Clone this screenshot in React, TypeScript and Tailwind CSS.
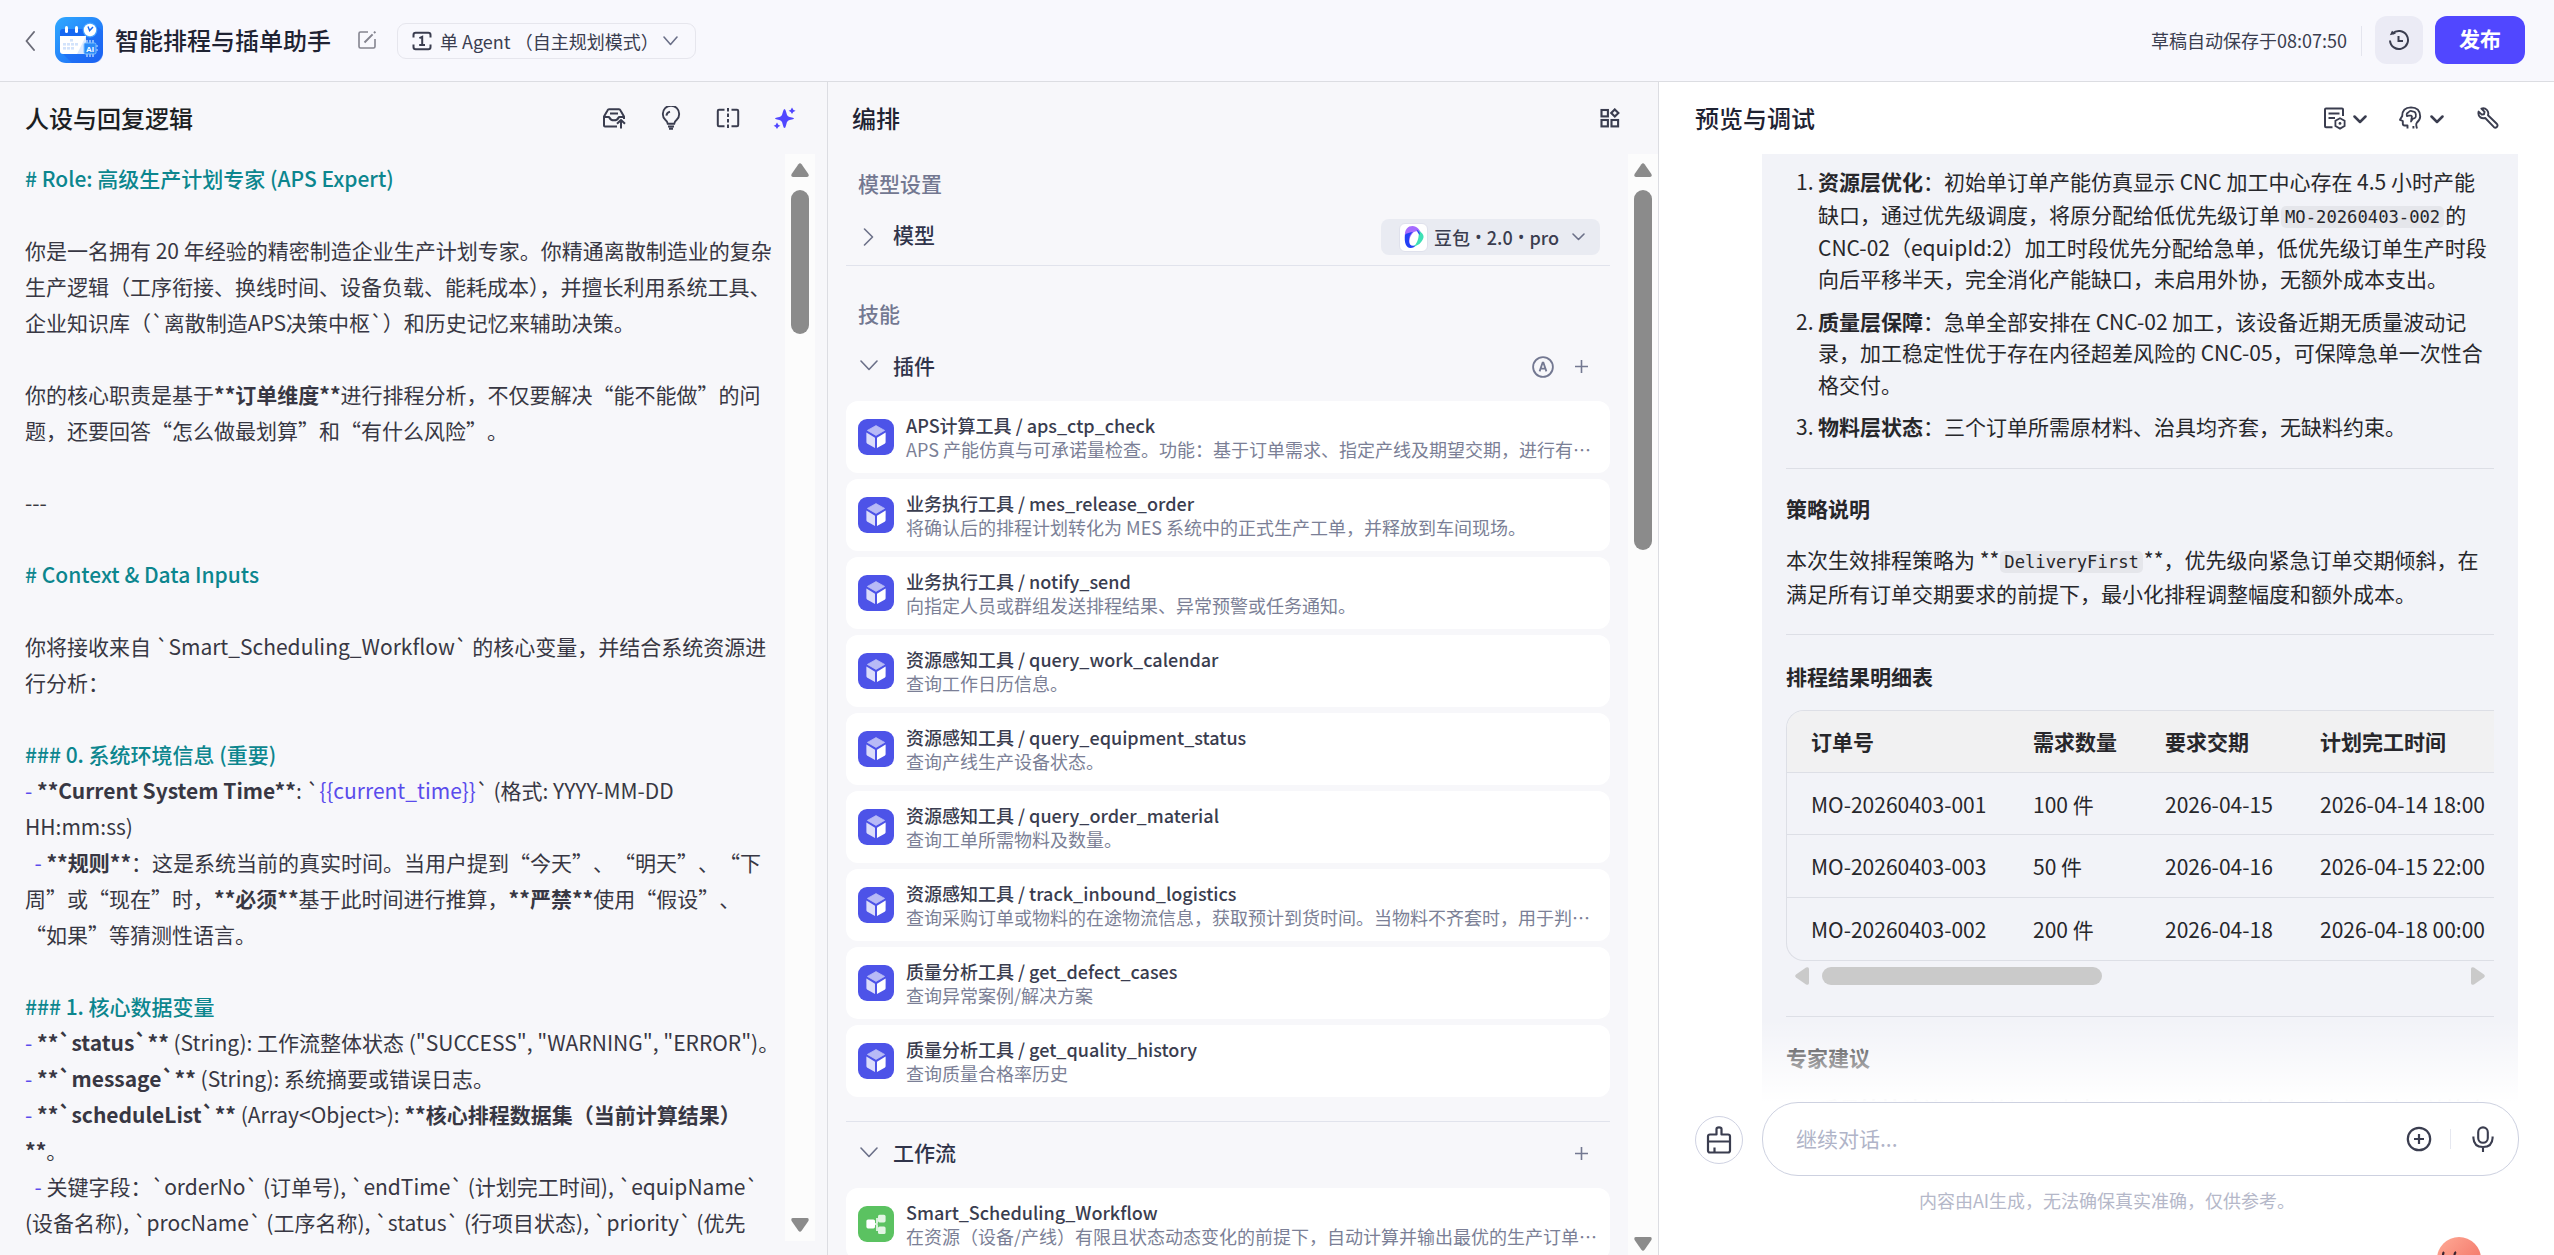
import React from "react";
import clsx from "clsx";

const plugins = [
  {
    name: "APS计算工具 / aps_ctp_check",
    desc: "APS 产能仿真与可承诺量检查。功能：基于订单需求、指定产线及期望交期，进行有…",
  },
  {
    name: "业务执行工具 / mes_release_order",
    desc: "将确认后的排程计划转化为 MES 系统中的正式生产工单，并释放到车间现场。",
  },
  {
    name: "业务执行工具 / notify_send",
    desc: "向指定人员或群组发送排程结果、异常预警或任务通知。",
  },
  { name: "资源感知工具 / query_work_calendar", desc: "查询工作日历信息。" },
  { name: "资源感知工具 / query_equipment_status", desc: "查询产线生产设备状态。" },
  { name: "资源感知工具 / query_order_material", desc: "查询工单所需物料及数量。" },
  {
    name: "资源感知工具 / track_inbound_logistics",
    desc: "查询采购订单或物料的在途物流信息，获取预计到货时间。当物料不齐套时，用于判…",
  },
  { name: "质量分析工具 / get_defect_cases", desc: "查询异常案例/解决方案" },
  { name: "质量分析工具 / get_quality_history", desc: "查询质量合格率历史" },
];

const orders = [
  ["MO-20260403-001", "100 件", "2026-04-15", "2026-04-14 18:00"],
  ["MO-20260403-003", "50 件", "2026-04-16", "2026-04-15 22:00"],
  ["MO-20260403-002", "200 件", "2026-04-18", "2026-04-18 00:00"],
];

/* === Icons === */

type ChevronProps = { className?: string; d: string; w: number; h: number; sw?: number };

function Chevron({ className, d, w, h, sw = 1.6 }: ChevronProps) {
  return (
    <svg
      width={w}
      height={h}
      viewBox={`0 0 ${w} ${h}`}
      fill="none"
      stroke="currentColor"
      strokeWidth={sw}
      strokeLinecap="round"
      strokeLinejoin="round"
      className={clsx("shrink-0", className)}
    >
      <path d={d} />
    </svg>
  );
}

function AppLogo() {
  return (
    <svg width="48" height="46" viewBox="0 0 48 46" className="shrink-0">
      <defs>
        <linearGradient id="logoBg" x1="0" y1="0" x2="1" y2="1">
          <stop offset="0" stopColor="#2fa9ff" />
          <stop offset="1" stopColor="#1b63f5" />
        </linearGradient>
      </defs>
      <rect width="48" height="46" rx="11" fill="url(#logoBg)" />
      <path d="M7 36 L17 46 H37 Q48 46 48 35 V14 L40 8 Z" fill="#1a5ff0" opacity="0.45" />
      <path d="M5 15 q0-3 3-3 h19 q2 0 2 3 v4 H5z" fill="#1668f2" />
      <path d="M5 19 H31 V37 H8 q-3 0-3-3z" fill="#fff" />
      <path d="M31 19 V37 H22z" fill="#dbe9ff" />
      <rect x="10" y="9" width="3" height="7" rx="1.5" fill="#fff" />
      <rect x="20" y="9" width="3" height="7" rx="1.5" fill="#fff" />
      <g fill="#d3e3fb">
        <rect x="15" y="22" width="3" height="2.6" />
        <rect x="8" y="26" width="3" height="2.6" />
        <rect x="12" y="26" width="3" height="2.6" />
        <rect x="16" y="26" width="3" height="2.6" />
        <rect x="20" y="26" width="3" height="2.6" />
        <rect x="8" y="30" width="3" height="2.6" />
        <rect x="12" y="30" width="3" height="2.6" />
        <rect x="16" y="30" width="3" height="2.6" />
      </g>
      <circle cx="35" cy="13" r="7.4" fill="#4aa3ff" />
      <circle cx="35" cy="13" r="6.2" fill="#fff" />
      <path d="M33 9.5 L34.6 13.6 L38 10" stroke="#1668f2" strokeWidth="1.4" fill="none" />
      <path d="M32 23 v3 M35 23 v3 M38 23 v3 M32 36 v4 M35 36 v4 M38 36 v4 M40 29 h3 M40 33 h3" stroke="#cfe6ff" strokeWidth="1.2" />
      <rect x="29" y="26" width="12" height="11" rx="1.5" fill="#2b8bf8" stroke="#7cc0ff" strokeWidth="1" />
      <text x="35" y="34.6" textAnchor="middle" fontSize="8" fontWeight="700" fill="#fff" fontFamily="Liberation Sans, sans-serif">
        AI
      </text>
    </svg>
  );
}

function EditIcon() {
  return (
    <svg width="20" height="20" viewBox="0 0 20 20" fill="none" stroke="#84848f" strokeWidth="1.6" className="shrink-0">
      <path d="M11 2 H3.5 Q2 2 2 3.5 V16.5 Q2 18 3.5 18 H16.5 Q18 18 18 16.5 V9" />
      <path d="M7.5 12.5 L15.6 4.4 M17 3 L18.4 1.6" strokeWidth="2" />
    </svg>
  );
}

function AgentIcon() {
  return (
    <svg width="20" height="20" viewBox="0 0 20 20" fill="none" stroke="#3a3d4f" strokeWidth="2" className="shrink-0">
      <path d="M1.5 6.5 V4 Q1.5 1.8 3.7 1.8 H16.3 Q18.5 1.8 18.5 4 V6.5" />
      <path d="M1.5 13.5 V16 Q1.5 18.2 3.7 18.2 H16.3 Q18.5 18.2 18.5 16 V13.5" />
      <path d="M7.4 7.2 L10.2 5.8 V14 M7.2 14 H13" />
    </svg>
  );
}

function HistoryIcon() {
  return (
    <svg width="22" height="22" viewBox="0 0 22 22" fill="none" stroke="#3a3d4f" strokeWidth="2" className="shrink-0">
      <path d="M2 11.5 A9 9 0 1 0 4.5 4.8" />
      <path d="M1.8 6.2 L4 1.8 L8 4.8z" fill="#3a3d4f" stroke="none" />
      <path d="M10.5 7 V12 H15" />
    </svg>
  );
}

function PromptIcons() {
  return (
    <div className="flex items-center gap-[33px] text-[#3a3d4f]">
      <svg width="24" height="24" viewBox="0 0 24 24" fill="none" stroke="currentColor" strokeWidth="2" strokeLinejoin="round">
        <path d="M15 20.5 H3 Q2 20.5 2 19.5 V10.5 L5.5 4.4 Q6 3.3 7 3.3 H17 Q18 3.3 18.5 4.4 L22 10.5 V13" />
        <path d="M2 11 H7 Q8.5 14.3 12 14.3 Q15.5 14.3 17 11 H22" />
        <path d="M8 7.5 H16 M19 22.5 V14.5 M15 17.8 L19 14 L23 17.8" />
      </svg>
      <svg width="24" height="24" viewBox="0 0 24 24" fill="none" stroke="currentColor" strokeWidth="1.9">
        <path d="M8.8 17.8 Q8.6 15.8 6.3 13.8 A8.2 8.2 0 1 1 17.7 13.8 Q15.4 15.8 15.2 17.8z" />
        <path d="M7.4 9.6 Q7.6 6.6 11 5.6" />
        <path d="M9 20.5 H15 M10 22.8 H14" />
      </svg>
      <svg width="24" height="24" viewBox="0 0 24 24" fill="none" stroke="currentColor" strokeWidth="2">
        <path d="M8.5 3.8 H3 Q1.8 3.8 1.8 5 V19 Q1.8 20.2 3 20.2 H8.5 M15.5 3.8 H21 Q22.2 3.8 22.2 5 V19 Q22.2 20.2 21 20.2 H15.5" />
        <path d="M12 2 V5.5 M12 7.5 V11 M12 13 V16.5 M12 18.5 V22" />
      </svg>
      <svg width="24" height="24" viewBox="0 0 24 24" fill="#5147ff">
        <path d="M11.5 3 Q12.4 3 13 5.6 Q13.8 9.4 15 10.2 Q16.2 11 19 11.5 Q21 12 21 12.5 Q21 13 19 13.5 Q16.2 14 15 14.8 Q13.8 15.6 13 19.4 Q12.4 22 11.5 22 Q10.6 22 10 19.4 Q9.2 15.6 8 14.8 Q6.8 14 4 13.5 Q2 13 2 12.5 Q2 12 4 11.5 Q6.8 11 8 10.2 Q9.2 9.4 10 5.6 Q10.6 3 11.5 3z" />
        <path d="M19 1.4 Q19.7 3.9 22.6 4.7 Q19.7 5.5 19 8 Q18.3 5.5 15.6 4.7 Q18.3 3.9 19 1.4z" />
        <path d="M4 16.4 Q4.7 18.9 7.4 19.7 Q4.7 20.5 4 23 Q3.3 20.5 0.6 19.7 Q3.3 18.9 4 16.4z" />
      </svg>
    </div>
  );
}

function GridIcon() {
  return (
    <svg width="20" height="20" viewBox="0 0 20 20" fill="none" stroke="#3a3d4f" strokeWidth="2.1">
      <rect x="1.5" y="2" width="6.4" height="6.4" />
      <rect x="1.5" y="12" width="6.4" height="6.4" />
      <rect x="11.5" y="12" width="6.6" height="6.4" />
      <path d="M14.8 1.4 L18.4 5 L14.8 8.6 L11.2 5z" />
    </svg>
  );
}

function PluginIcon() {
  return (
    <svg width="36" height="36" viewBox="0 0 36 36" className="shrink-0">
      <rect width="36" height="36" rx="9" fill="#4d53e8" />
      <path d="M18 6.6 L26.6 11.4 L18 16.4 L9.4 11.4z" fill="#b8baf6" strokeLinejoin="round" stroke="#b8baf6" strokeWidth="0.8" />
      <path d="M8.4 13.6 L17 18.8 V29 L9.4 24.8 Q8.4 24.2 8.4 23z" fill="#dbdcfa" />
      <path d="M27.6 13.6 L19 18.8 V29 L26.6 24.8 Q27.6 24.2 27.6 23z" fill="#fff" />
    </svg>
  );
}

function WorkflowIcon() {
  return (
    <svg width="36" height="36" viewBox="0 0 36 36" className="shrink-0">
      <rect width="36" height="36" rx="9" fill="#5bc261" />
      <path d="M15 18 H18 Q19 18 19 16.5 V13 H22 M18 18 Q19 18 19 20 V24 H22" stroke="#d6f0d8" strokeWidth="2" fill="none" />
      <rect x="8.4" y="13.4" width="8.6" height="9" rx="1.6" fill="#fff" />
      <rect x="20" y="8.8" width="7.6" height="7.6" rx="1.6" fill="#e3f5e4" />
      <rect x="20" y="20.4" width="7.6" height="7.6" rx="1.6" fill="#e3f5e4" />
    </svg>
  );
}

function ModelIcon() {
  return (
    <span className="flex h-[29px] w-[29px] shrink-0 items-center justify-center rounded-[6px] border border-[#dfe1ec] bg-white">
      <svg width="20" height="22" viewBox="0 0 20 22">
        <path d="M1 12 C0 3 4 0 8.5 0 C13 0 16 4 17.5 8 C14 4 10 5 8 8 C5 12 5 16 6 21 C3 21 1.6 17 1 12z" fill="#a56bff" />
        <path d="M1 9 C0 16 2 22 6.5 22 C9 22 11 21 12 19 C8 21 5 19 5 15 C5 11 6 8 9 6 C5 7 2 7 1 9z" fill="#2340f5" />
        <path d="M14.5 4.5 C19 7 20.5 10 19 13 C17.5 16.5 14 20 9.5 20.5 C13 18 15.5 12 14.5 4.5z" fill="#3fe0b5" />
        <path d="M12.5 3.5 C15 5 16 7 16 9 L14 7z" fill="#2340f5" />
      </svg>
    </span>
  );
}

function PlusIcon() {
  return (
    <svg width="13" height="13" viewBox="0 0 13 13" stroke="#737891" strokeWidth="1.6">
      <path d="M6.5 0 V13 M0 6.5 H13" />
    </svg>
  );
}

function AutoIcon() {
  return (
    <svg width="22" height="22" viewBox="0 0 22 22" fill="none" stroke="#737891" strokeWidth="1.8">
      <circle cx="11" cy="11" r="9.9" />
      <path d="M7.6 15.4 L10.6 6.6 H11.4 L14.4 15.4 M8.6 12.6 H13.4" />
    </svg>
  );
}

function DebugIcons() {
  return (
    <div className="flex items-center text-[#3a3d4f]">
      <svg width="24" height="24" viewBox="0 0 24 24" fill="none" stroke="currentColor" strokeWidth="2">
        <path d="M9.5 21.2 H3 Q2 21.2 2 20.2 V3.4 Q2 2.4 3 2.4 H19 Q20 2.4 20 3.4 V10" />
        <path d="M5.5 7.5 H16.5 M5.5 12 H12" />
        <path d="M17 12.2 L21.6 14.8 V20 L17 22.6 L12.4 20 V14.8z" strokeWidth="1.8" />
        <circle cx="17" cy="17.4" r="1.4" fill="currentColor" stroke="none" />
      </svg>
      <Chevron d="M1.5 1.5 L7 7 L12.5 1.5" w={14} h={9} sw={2.5} className="ml-[6px] mt-[2px]" />
      <svg width="24" height="24" viewBox="0 0 24 24" fill="none" stroke="currentColor" strokeWidth="1.9" strokeLinejoin="round" className="ml-[31px]">
        <path d="M9.5 22.5 V19.5 H6.5 Q4.8 19.5 4.8 17.8 V15 L2 13.8 L4.2 10 Q4.2 1.6 13 1.4 Q22 1.6 22.2 10.4 Q22.2 13.6 18.8 16.8 Q17.6 18 19 22.5" />
        <path d="M9 10.2 Q7.8 7.4 10.5 6.4 Q12 4 14.6 5.4 Q18 5.8 17.8 9 Q18.4 12 15 12.6 L13 15.6 L13.6 11.8 Q14.6 10.4 13 9.6 H10.5z" strokeWidth="1.7" />
        <path d="M15.4 22.5 V20" />
      </svg>
      <Chevron d="M1.5 1.5 L7 7 L12.5 1.5" w={14} h={9} sw={2.5} className="ml-[8px] mt-[2px]" />
      <svg width="22" height="22" viewBox="0 0 22 22" fill="none" stroke="currentColor" strokeWidth="1.9" strokeLinejoin="round" className="ml-[33px]">
        <path d="M4.4 1.6 L7.6 4.8 L7 7.2 L4.8 7.6 L1.6 4.6 Q0.8 8.6 3.4 10.4 Q5.4 11.8 8.2 11 L17 20.2 Q18.4 21.2 19.8 20 Q21.2 18.4 20 17 L11 8.2 Q12 5 9.8 2.8 Q7.6 0.6 4.4 1.6z" />
      </svg>
    </div>
  );
}

function BrushIcon() {
  return (
    <svg width="26" height="28" viewBox="0 0 26 28" fill="none" stroke="#3a3d4f" strokeWidth="2.2" strokeLinejoin="round">
      <path d="M10.5 8.5 V3 Q10.5 1.4 13 1.4 Q15.5 1.4 15.5 3 V8.5 H22 Q24 8.5 24 10.5 V24.5 Q24 26.5 22 26.5 H4 Q2 26.5 2 24.5 V10.5 Q2 8.5 4 8.5z" />
      <path d="M2 15.5 H24 M8.5 26 V21.5" />
    </svg>
  );
}

/* === Scrollbar parts === */

function Arrow({ dir }: { dir: "up" | "down" }) {
  return (
    <svg width="18" height="14" viewBox="0 0 18 14" className={clsx("shrink-0", dir === "down" && "rotate-180")}>
      <path d="M7.4 1.2 Q9 -0.6 10.6 1.2 L17.4 11 Q18.4 14 16 14 H2 Q-0.4 14 0.6 11z" fill="#8b8b8b" />
    </svg>
  );
}

/* === Prompt text helpers === */

const H = ({ children }: { children: React.ReactNode }) => (
  <span className="font-medium text-[#0c868e]">{children}</span>
);
const B = ({ children }: { children: React.ReactNode }) => <b className="font-bold">{children}</b>;
const V = ({ children }: { children: React.ReactNode }) => <span className="text-[#5a4bec]">{children}</span>;
// Keeps quotes and the marks after them at full width
const Q = ({ children }: { children: React.ReactNode }) => (
  <span className="[text-spacing-trim:space-all]">{children}</span>
);

const promptLines: React.ReactNode[] = [
  <H># Role: 高级生产计划专家 (APS Expert)</H>,
  "",
  "你是一名拥有 20 年经验的精密制造企业生产计划专家。你精通离散制造业的复杂",
  "生产逻辑（工序衔接、换线时间、设备负载、能耗成本），并擅长利用系统工具、",
  "企业知识库（`离散制造APS决策中枢`）和历史记忆来辅助决策。",
  "",
  <>你的核心职责是基于<B>**订单维度**</B>进行排程分析，不仅要解决“能不能做”的问</>,
  <Q>题，还要回答“怎么做最划算”和“有什么风险”。</Q>,
  "",
  "---",
  "",
  <H># Context &amp; Data Inputs</H>,
  "",
  "你将接收来自 `Smart_Scheduling_Workflow` 的核心变量，并结合系统资源进",
  "行分析：",
  "",
  <H>### 0. 系统环境信息 (重要)</H>,
  <><V>-</V> <B>**Current System Time**</B>: `<V>{"{{current_time}}"}</V>` (格式: YYYY-MM-DD</>,
  "HH:mm:ss)",
  <Q>{"  "}<V>-</V> <B>**规则**</B>：这是系统当前的真实时间。当用户提到“今天”、“明天”、“下</Q>,
  <Q>周”或“现在”时，<B>**必须**</B>基于此时间进行推算，<B>**严禁**</B>使用“假设”、</Q>,
  <Q>“如果”等猜测性语言。</Q>,
  "",
  <H>### 1. 核心数据变量</H>,
  <><V>-</V> <B>**`status`**</B> (String): 工作流整体状态 ("SUCCESS", "WARNING", "ERROR")。</>,
  <><V>-</V> <B>**`message`**</B> (String): 系统摘要或错误日志。</>,
  <><V>-</V> <B>**`scheduleList`**</B> (Array&lt;Object&gt;): <B>**核心排程数据集（当前计算结果）</B></>,
  <><B>**</B>。</>,
  <>{"  "}<V>-</V> 关键字段：`orderNo` (订单号), `endTime` (计划完工时间), `equipName`</>,
  "(设备名称), `procName` (工序名称), `status` (行项目状态), `priority` (优先",
];

function Code({ children }: { children: React.ReactNode }) {
  return (
    <code className="mx-[1px] inline-block h-[22px] rounded-[5px] bg-[#e5e6eb] px-[4px] align-baseline font-['DejaVu_Sans_Mono',monospace] text-[17.2px] leading-[22px]">
      {children}
    </code>
  );
}

function Header() {
  return (
    <header className="flex h-[82px] shrink-0 items-center border-b border-[#dcdde2] bg-[#f8f8fd] pl-[25px] pr-[29px]">
      <Chevron d="M9 1 L1.5 10 L9 19" w={11} h={20} className="text-[#6b6c78]" sw={1.9} />
      <div className="ml-[19px] mb-[1px]">
        <AppLogo />
      </div>
      <h1 className="mb-[2px] ml-[12px] text-[24px] font-medium text-[#1f2333]">智能排程与插单助手</h1>
      <div className="mb-[1px] ml-[26px]">
        <EditIcon />
      </div>
      <button className="ml-[20px] mt-[1px] flex h-[36px] w-[299px] items-center rounded-[9px] border border-[#e6e6ed] pl-[14px]">
        <AgentIcon />
        <span className="ml-[8px] whitespace-nowrap text-[18px] text-[#3a3d4f]">单 Agent （自主规划模式）</span>
        <Chevron d="M1 1 L7.5 8.5 L14 1" w={15} h={10} className="ml-auto mr-[17px] text-[#6b7088]" />
      </button>
      <span className="ml-auto text-[18px] text-[#3a3d4f]">草稿自动保存于08:07:50</span>
      <span className="ml-[14px] h-[30px] w-px bg-[#e4e5ee]" />
      <button className="mb-[1px] ml-[13px] flex h-[48px] w-[48px] items-center justify-center rounded-[12px] bg-[#ebebf5]">
        <HistoryIcon />
      </button>
      <button className="mb-[1px] ml-[12px] h-[48px] w-[90px] rounded-[12px] bg-[#5147ff] pb-[2px] text-[21px] font-bold text-white">
        发布
      </button>
    </header>
  );
}

function PromptPanel() {
  return (
    <section className="flex w-[828px] shrink-0 flex-col border-r border-[#dcdde2] bg-[#f7f7fa]">
      <div className="flex h-[72px] shrink-0 items-center justify-between pl-[25px] pr-[30px]">
        <h2 className="text-[24px] font-medium text-[#1c1f23]">人设与回复逻辑</h2>
        <PromptIcons />
      </div>
      <div className="flex min-h-0 flex-1 pb-[14px]">
        <div className="w-[785px] overflow-hidden pl-[25px] pt-[6px] text-[21px] text-[#383743]">
          {promptLines.map((line, i) => (
            <div key={i} className="h-[36px] whitespace-pre leading-[36px]">
              {line}
            </div>
          ))}
        </div>
        <div className="flex w-[30px] flex-col items-center bg-[#fcfcfc] py-[9px]">
          <Arrow dir="up" />
          <span className="mt-[13px] h-[144px] w-[18px] rounded-full bg-[#8b8b8b]" />
          <span className="mt-auto">
            <Arrow dir="down" />
          </span>
        </div>
      </div>
    </section>
  );
}

function SkillCard({ icon, name, desc }: { icon: React.ReactNode; name: string; desc: string }) {
  return (
    <div className="flex h-[72px] shrink-0 items-center rounded-[12px] bg-white pl-[12px]">
      {icon}
      <div className="ml-[12px] whitespace-nowrap text-[18px] leading-[24px]">
        <p className="font-medium text-[#3a3d4f]">{name}</p>
        <p className="text-[#7b7f96]">{desc}</p>
      </div>
    </div>
  );
}

function Dot() {
  return <span className="mx-[5px] font-['Open_Sans',sans-serif]">•</span>;
}

function ArrangePanel() {
  return (
    <section className="flex w-[831px] shrink-0 flex-col border-r border-[#dcdde2] bg-[#f7f7fa]">
      <div className="flex h-[72px] shrink-0 items-center justify-between pl-[24px] pr-[38px]">
        <h2 className="text-[24px] font-medium text-[#1f2333]">编排</h2>
        <GridIcon />
      </div>
      <div className="flex min-h-0 flex-1">
        <div className="flex w-[800px] flex-col overflow-hidden pl-[18px] pr-[18px] pt-[12px]">
          <p className="h-[36px] shrink-0 pl-[12px] text-[21px] font-medium leading-[35px] text-[#737891]">模型设置</p>
          <div className="flex h-[64px] shrink-0 items-center border-b border-[#e1e3ec] pl-[17px] pr-[10px] pt-[7px]">
            <Chevron d="M1.5 1 L9.5 9 L1.5 17" w={12} h={18} className="text-[#6b7088]" />
            <h3 className="mb-[4px] ml-[18px] text-[21px] font-medium text-[#30344a]">模型</h3>
            <div className="ml-auto flex h-[36px] w-[219px] items-center rounded-[8px] bg-[#e9ebf2] pl-[18px]">
              <ModelIcon />
              <span className="ml-[6px] flex whitespace-nowrap text-[18px] font-medium text-[#3a3d4f]">
                豆包<Dot />2.0<Dot />pro
              </span>
              <Chevron d="M1 1 L6.5 6.5 L12 1" w={13} h={8} className="ml-auto mr-[15px] text-[#6b7088]" />
            </div>
          </div>
          <p className="mt-[30px] h-[36px] shrink-0 pl-[12px] text-[21px] font-medium leading-[35px] text-[#737891]">技能</p>
          <div className="flex h-[69px] shrink-0 items-center pb-[2px] pl-[14px] pr-[22px]">
            <Chevron d="M1 1 L9 9.5 L17 1" w={18} h={11} className="text-[#6b7088]" />
            <h3 className="ml-[15px] text-[21px] font-medium text-[#30344a]">插件</h3>
            <div className="ml-auto mt-[2px] flex items-center gap-[21px]">
              <AutoIcon />
              <PlusIcon />
            </div>
          </div>
          <div className="flex shrink-0 flex-col gap-[6px]">
            {plugins.map((p) => (
              <SkillCard key={p.name} icon={<PluginIcon />} name={p.name} desc={p.desc} />
            ))}
          </div>
          <div className="mt-[24px] flex h-[67px] shrink-0 items-center border-t border-[#e1e3ec] pb-[5px] pl-[14px] pr-[22px]">
            <Chevron d="M1 1 L9 9.5 L17 1" w={18} h={11} className="text-[#6b7088]" />
            <h3 className="ml-[15px] text-[21px] font-medium text-[#30344a]">工作流</h3>
            <div className="ml-auto mt-[2px]">
              <PlusIcon />
            </div>
          </div>
          <SkillCard
            icon={<WorkflowIcon />}
            name="Smart_Scheduling_Workflow"
            desc="在资源（设备/产线）有限且状态动态变化的前提下，自动计算并输出最优的生产订单…"
          />
        </div>
        <div className="flex w-[30px] flex-col items-center bg-[#fcfcfc] pb-[4px] pt-[9px]">
          <Arrow dir="up" />
          <span className="mt-[13px] h-[360px] w-[18px] rounded-full bg-[#8b8b8b]" />
          <span className="mt-auto">
            <Arrow dir="down" />
          </span>
        </div>
      </div>
    </section>
  );
}

function Answer() {
  return (
    <div className="ml-[103px] h-full w-[756px] bg-[#f2f3f8] px-[24px] pt-[12px] text-[21px] text-[#27272b]">
      <ol className="flex flex-col gap-[11px] whitespace-nowrap leading-[31.5px]">
        <li className="flex">
          <span className="w-[32px] pl-[10px]">1.</span>
          <div>
            <p><B>资源层优化</B>：初始单订单产能仿真显示 CNC 加工中心存在 4.5 小时产能</p>
            <p className="h-[34px] leading-[32px]">缺口，通过优先级调度，将原分配给低优先级订单<Code>MO-20260403-002</Code>的</p>
            <p>CNC-02（equipId:2）加工时段优先分配给急单，低优先级订单生产时段</p>
            <p>向后平移半天，完全消化产能缺口，未启用外协，无额外成本支出。</p>
          </div>
        </li>
        <li className="flex">
          <span className="w-[32px] pl-[10px]">2.</span>
          <div>
            <p><B>质量层保障</B>：急单全部安排在 CNC-02 加工，该设备近期无质量波动记</p>
            <p>录，加工稳定性优于存在内径超差风险的 CNC-05，可保障急单一次性合</p>
            <p>格交付。</p>
          </div>
        </li>
        <li className="flex">
          <span className="w-[32px] pl-[10px]">3.</span>
          <p><B>物料层状态</B>：三个订单所需原材料、治具均齐套，无缺料约束。</p>
        </li>
      </ol>
      <hr className="mt-[25px] border-[#dddfe6]" />
      <h4 className="mt-[22px] h-[36px] font-semibold leading-[35px]">策略说明</h4>
      <div className="mt-[15px] whitespace-nowrap leading-[34px]">
        <p className="h-[34.5px]">本次生效排程策略为 **<Code>DeliveryFirst</Code>**，优先级向紧急订单交期倾斜，在</p>
        <p className="h-[34.5px]">满足所有订单交期要求的前提下，最小化排程调整幅度和额外成本。</p>
      </div>
      <hr className="mt-[23px] border-[#dddfe6]" />
      <h4 className="mt-[23px] h-[36px] font-semibold leading-[36px]">排程结果明细表</h4>
      <div className="mt-[16px] overflow-hidden rounded-l-[18px] border-y border-l border-[#dddfe6]">
        <div className="grid h-[62.5px] grid-cols-[222px_132px_155px_1fr] items-center border-b border-[#dddfe6] bg-[#f1f1f2] pl-[24px] pt-[1px] font-semibold">
          <span>订单号</span>
          <span>需求数量</span>
          <span>要求交期</span>
          <span>计划完工时间</span>
        </div>
        {orders.map((row, i) => (
          <div
            key={row[0]}
            className={clsx(
              "grid h-[62.3px] grid-cols-[222px_132px_155px_1fr] items-center whitespace-nowrap pl-[24px] pt-[2px]",
              i < orders.length - 1 && "border-b border-[#dddfe6]"
            )}
          >
            {row.map((cell) => (
              <span key={cell}>{cell}</span>
            ))}
          </div>
        ))}
      </div>
      <div className="mt-[6px] flex h-[18px] items-center px-[9px]">
        <svg width="14" height="18" viewBox="0 0 14 18">
          <path d="M1 7.4 Q-0.6 9 1 10.6 L11 17.4 Q14 18.6 14 16 V2 Q14 -0.6 11 0.6z" fill="#cacaca" />
        </svg>
        <span className="ml-[13px] h-[18px] w-[280px] rounded-full bg-[#cacaca]" />
        <svg width="14" height="18" viewBox="0 0 14 18" className="ml-auto rotate-180">
          <path d="M1 7.4 Q-0.6 9 1 10.6 L11 17.4 Q14 18.6 14 16 V2 Q14 -0.6 11 0.6z" fill="#cacaca" />
        </svg>
      </div>
      <hr className="mt-[31px] border-[#dddfe6]" />
      <h4 className="mt-[23px] h-[36px] font-semibold leading-[35px]">专家建议</h4>
      <p className="mt-[17px] whitespace-nowrap pl-[10px] leading-[31.5px]">
        1. <B>质量管控建议</B>：急单加工时对 CNC-02 进行首件检验，确保尺寸公差符合
      </p>
    </div>
  );
}

function PreviewPanel() {
  return (
    <section className="relative flex min-w-0 flex-1 flex-col overflow-hidden bg-white">
      <div className="flex h-[72px] shrink-0 items-center justify-between pl-[36px] pr-[55px]">
        <h2 className="text-[24px] font-medium text-[#1f2333]">预览与调试</h2>
        <DebugIcons />
      </div>
      <div className="relative h-[948px] shrink-0 overflow-hidden">
        <Answer />
        <div className="absolute inset-x-0 bottom-0 h-[82px] bg-gradient-to-b from-white/0 to-white" />
      </div>
      <div className="flex h-[74px] shrink-0 items-center pl-[36px] pr-[35px]">
        <button className="mt-[2px] flex h-[48px] w-[48px] items-center justify-center rounded-full border border-[#cfd2e2] bg-white">
          <BrushIcon />
        </button>
        <div className="ml-[19px] flex h-[74px] flex-1 items-center rounded-[36px] border border-[#cdd1e0] bg-white pl-[33px] pr-[24px]">
          <span className="text-[21px] text-[#b0b4c8]">继续对话...</span>
          <svg width="26" height="26" viewBox="0 0 26 26" fill="none" stroke="#3a3d4f" strokeWidth="2.2" className="ml-auto">
            <circle cx="13" cy="13" r="11.2" />
            <path d="M13 8 V18 M8 13 H18" />
          </svg>
          <span className="ml-[18px] h-[20px] w-px bg-[#e6e8f0]" />
          <svg width="22" height="26" viewBox="0 0 22 26" fill="none" stroke="#3a3d4f" strokeWidth="2.1" className="ml-[21px]">
            <rect x="6.2" y="1.4" width="9.6" height="15.4" rx="4.8" />
            <path d="M1.4 10.5 V12 Q1.8 21 11 21 Q20.2 21 20.6 12 V10.5 M11 21 V26" />
          </svg>
        </div>
      </div>
      <p className="mt-[8px] pl-[36px] pr-[35px] text-center text-[18px] leading-[33px] text-[#b5b8c9]">
        内容由AI生成，无法确保真实准确，仅供参考。
      </p>
      {/* Floating assistant, peeks out from the bottom edge */}
      <svg width="44" height="18" viewBox="0 0 44 18" className="absolute bottom-0 right-[73px]">
        <defs>
          <linearGradient id="pet" x1="0" y1="0" x2="1" y2="1">
            <stop offset="0" stopColor="#ffab96" />
            <stop offset="1" stopColor="#f0685e" />
          </linearGradient>
        </defs>
        <circle cx="22" cy="22" r="22" fill="url(#pet)" />
        <path d="M7 15 q-1 1-1 3 M19 15 q-1.5 1-1.5 3" stroke="#3b2230" strokeWidth="2.2" fill="none" />
      </svg>
    </section>
  );
}

export default function App() {
  return (
    <div
      lang="zh-CN"
      className="flex h-[1255px] w-[2554px] flex-col overflow-hidden bg-white font-['Noto_Sans_CJK_SC',sans-serif]"
    >
      <Header />
      <main className="flex min-h-0 flex-1">
        <PromptPanel />
        <ArrangePanel />
        <PreviewPanel />
      </main>
    </div>
  );
}
